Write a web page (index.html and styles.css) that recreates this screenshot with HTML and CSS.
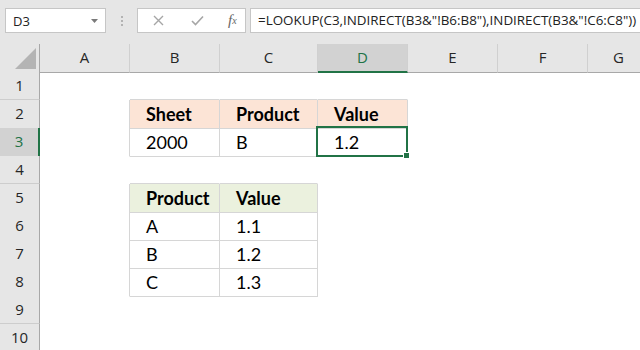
FILE: index.html
```html
<!DOCTYPE html>
<html>
	<head>
		<meta charset="utf-8">
		<title>LOOKUP INDIRECT</title>
	<link rel="stylesheet" href="styles.css">
	</head>
	<body>
	<div class="toolbar">
		<div class="namebox">
			<span>D3</span>
			<svg class="drop" width="7" height="4" viewBox="0 0 7 4"><path d="M0 0H7L3.5 4Z" fill="#7a7a7a"/></svg>
		</div>
		<div class="grip"><i></i><i></i><i></i></div>
		<div class="fxbox">
			<svg class="ico" width="11" height="11" viewBox="0 0 11 11"><path d="M1 1L10 10M10 1L1 10" stroke="#a6a6a6" stroke-width="1.4"/></svg>
			<svg class="ico" width="13" height="11" viewBox="0 0 13 11"><path d="M1 6L4.5 9.5L12 1.5" stroke="#a6a6a6" stroke-width="1.6" fill="none"/></svg>
			<span class="fx">f<sub>x</sub></span>
		</div>
		<div class="formula">=LOOKUP(C3,INDIRECT(B3&amp;"!B6:B8"),INDIRECT(B3&amp;"!C6:C8"))</div>
	</div>

	<div class="sheet">
		<div class="row head">
			<div class="corner"><svg width="21" height="21" viewBox="0 0 21 21"><path d="M21 0V21H0Z" fill="#b4b4b4"/></svg></div>
			<div class="ch">A</div>
			<div class="ch">B</div>
			<div class="ch">C</div>
			<div class="ch on">D</div>
			<div class="ch">E</div>
			<div class="ch">F</div>
			<div class="ch">G</div>
		</div>
		<div class="row">
			<div class="rh">1</div>
			<div class="c"></div><div class="c bb"></div><div class="c bb"></div><div class="c bb"></div><div class="c"></div><div class="c"></div><div class="c"></div>
		</div>
		<div class="row">
			<div class="rh">2</div>
			<div class="c rb"></div>
			<div class="c rb bb peach b">Sheet</div>
			<div class="c rb bb peach b">Product</div>
			<div class="c rb bb peach b">Value</div>
			<div class="c"></div><div class="c"></div><div class="c"></div>
		</div>
		<div class="row">
			<div class="rh on">3</div>
			<div class="c rb"></div>
			<div class="c rb bb">2000</div>
			<div class="c rb bb">B</div>
			<div class="c rb bb active">1.2</div>
			<div class="c"></div><div class="c"></div><div class="c"></div>
		</div>
		<div class="row">
			<div class="rh">4</div>
			<div class="c"></div><div class="c bb"></div><div class="c bb"></div><div class="c"></div><div class="c"></div><div class="c"></div><div class="c"></div>
		</div>
		<div class="row">
			<div class="rh">5</div>
			<div class="c rb"></div>
			<div class="c rb bb green b">Product</div>
			<div class="c rb bb green b">Value</div>
			<div class="c"></div><div class="c"></div><div class="c"></div><div class="c"></div>
		</div>
		<div class="row">
			<div class="rh">6</div>
			<div class="c rb"></div>
			<div class="c rb bb">A</div>
			<div class="c rb bb">1.1</div>
			<div class="c"></div><div class="c"></div><div class="c"></div><div class="c"></div>
		</div>
		<div class="row">
			<div class="rh">7</div>
			<div class="c rb"></div>
			<div class="c rb bb">B</div>
			<div class="c rb bb">1.2</div>
			<div class="c"></div><div class="c"></div><div class="c"></div><div class="c"></div>
		</div>
		<div class="row">
			<div class="rh">8</div>
			<div class="c rb"></div>
			<div class="c rb bb">C</div>
			<div class="c rb bb">1.3</div>
			<div class="c"></div><div class="c"></div><div class="c"></div><div class="c"></div>
		</div>
		<div class="row">
			<div class="rh">9</div>
			<div class="c"></div><div class="c"></div><div class="c"></div><div class="c"></div><div class="c"></div><div class="c"></div><div class="c"></div>
		</div>
		<div class="row">
			<div class="rh">10</div>
			<div class="c"></div><div class="c"></div><div class="c"></div><div class="c"></div><div class="c"></div><div class="c"></div><div class="c"></div>
		</div>
	</div>
	</body>
</html>
```

FILE: styles.css
```css
body{
	margin: 0;
	overflow: hidden;
	background: #fff;
}

/* formula bar */
.toolbar{
	display: flex;
	align-items: flex-start;
	height: 44px;
	box-sizing: border-box;
	padding: 8px 0 0 5px;
	background: #e6e6e6;
	font-family: "Open Sans", sans-serif;
	font-size: 13px;
	color: #222;
}
.namebox{
	display: flex;
	align-items: center;
	justify-content: space-between;
	width: 101px;
	height: 25px;
	box-sizing: border-box;
	padding: 0 7px 0 7px;
	background: #fff;
	border: 1px solid #c6c6c6;
}
.grip{
	display: flex;
	flex-direction: column;
	align-items: center;
	gap: 2px;
	width: 31px;
	padding-top: 8px;
}
.grip i{
	width: 2px;
	height: 2px;
	background: #b3b3b3;
}
.fxbox{
	display: flex;
	align-items: center;
	width: 109px;
	height: 25px;
	box-sizing: border-box;
	padding-left: 15px;
	background: #fff;
	border: 1px solid #c6c6c6;
}
.ico{
	margin-right: 27px;
}
.fx{
	font-family: "Liberation Serif", serif;
	font-style: italic;
	font-size: 15px;
	color: #666;
	margin-left: -3px;
}
.fx sub{
	font-size: 10px;
	vertical-align: 1px;
}
.formula{
	flex: 1;
	height: 25px;
	box-sizing: border-box;
	margin-left: 4px;
	padding: 2px 0 0 7px;
	background: #fff;
	border: 1px solid #c6c6c6;
	border-right: none;
	font-size: 13.4px;
	white-space: nowrap;
}

/* grid */
.sheet{
	width: 650px;
}
.row{
	display: grid;
	grid-template-columns: 40px 90px 90px 98px 90px 90px 90px 62px;
	height: 28px;
}
.c,.rh,.ch,.corner{
	box-sizing: border-box;
	border-right: 1px solid transparent;
	border-bottom: 1px solid transparent;
}
.c{
	padding-left: 16px;
	font-family: Lato, "Open Sans", sans-serif;
	font-size: 18px;
	line-height: 28px;
	color: #000;
	white-space: nowrap;
}
.c.b{
	font-weight: bold;
}
.rb{
	border-right-color: #d6d6d6;
}
.bb{
	border-bottom-color: #d6d6d6;
}
.peach{
	background: #fce4d6;
}
.green{
	background: #ebf1de;
}
.active{
	position: relative;
}
.active::before{
	content: "";
	position: absolute;
	left: -2px;
	top: -2px;
	right: -1px;
	bottom: -1px;
	border: 2px solid #217346;
}
.active::after{
	content: "";
	position: absolute;
	right: -3px;
	bottom: -3px;
	width: 5px;
	height: 5px;
	background: #217346;
	border: 1px solid #fff;
}

/* headers */
.head .ch,.head .corner,.rh{
	background: #e6e6e6;
	font-family: "Open Sans", sans-serif;
	font-size: 15px;
	color: #262626;
	text-align: center;
}
.head .ch{
	line-height: 27px;
	border-right-color: #d0d0d0;
	border-bottom-color: #a8a8a8;
}
.corner{
	display: flex;
	align-items: flex-end;
	justify-content: flex-end;
	padding: 0 3px 3px 0;
	border-right-color: #a8a8a8 !important;
	border-bottom-color: #a8a8a8 !important;
}
.rh{
	line-height: 27px;
	border-right-color: #a8a8a8;
	border-bottom-color: #cdcdcd;
}
.ch.on{
	background: #d2d2d2;
	color: #217346;
	border-bottom: 2px solid #217346;
}
.rh.on{
	background: #d2d2d2;
	color: #217346;
	border-right: 2px solid #217346;
}
```
